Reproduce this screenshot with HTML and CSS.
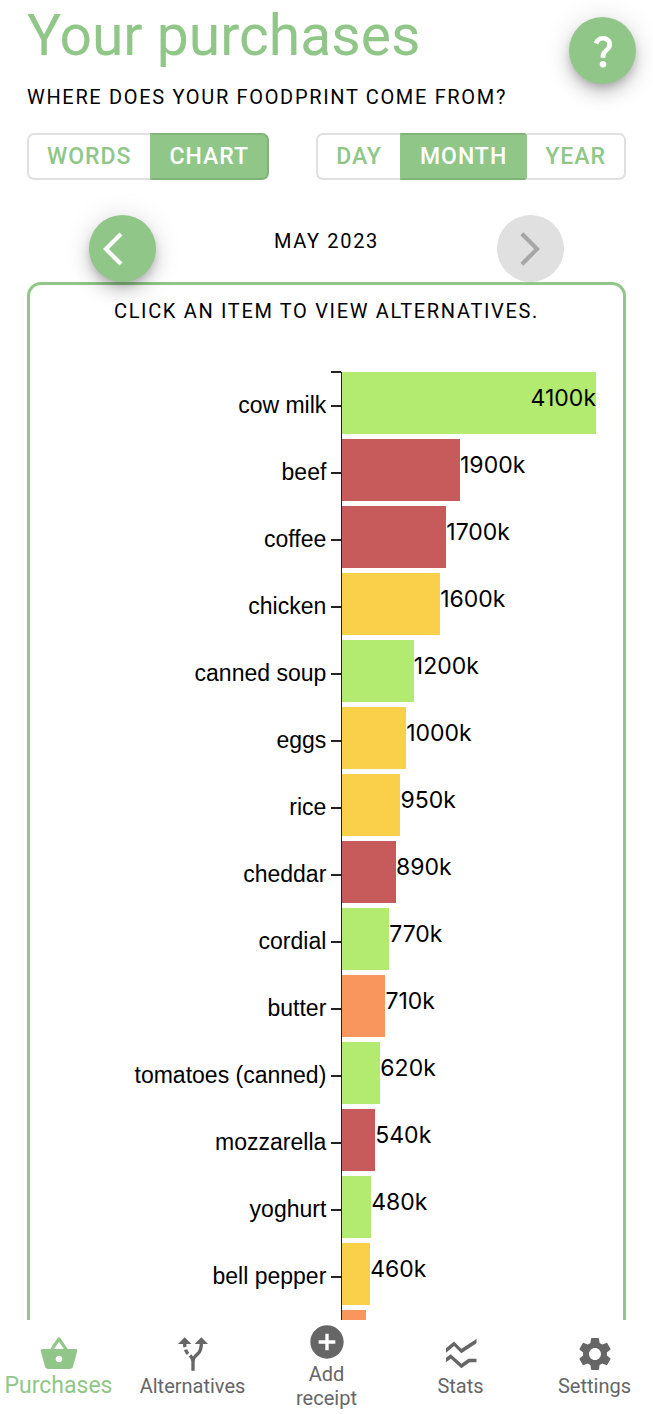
FILE: index.html
```html
<!DOCTYPE html>
<html lang="en">
<head>
<meta charset="utf-8">
<meta name="viewport" content="width=device-width, initial-scale=1">
<title>Your purchases</title>
<link rel="stylesheet" href="styles.css">
</head>
<body>
<main class="page">
  <header class="header">
    <div class="headings">
      <h1 class="title">Your purchases</h1>
      <p class="overline">Where does your foodprint come from?</p>
    </div>
    <button class="fab" type="button" aria-label="Help">
      <svg class="icon" viewBox="0 0 24 24"><path d="M11.07 12.85c.77-1.39 2.25-2.21 3.11-3.44.91-1.29.4-3.7-2.18-3.7-1.69 0-2.52 1.28-2.87 2.34L6.54 6.96C7.25 4.83 9.18 3 11.99 3c2.35 0 3.96 1.07 4.78 2.41.7 1.15 1.11 3.3.03 4.9-1.2 1.77-2.35 2.31-2.97 3.45-.25.46-.35.76-.35 2.24h-2.89c-.01-.78-.13-2.05.48-3.15zM14 20c0 1.1-.9 2-2 2s-2-.9-2-2 .9-2 2-2 2 .9 2 2z"/></svg>
    </button>
  </header>

  <div class="toggles">
    <div class="group" role="group" aria-label="View">
      <button class="toggle" type="button">Words</button>
      <button class="toggle selected" type="button" aria-pressed="true">Chart</button>
    </div>
    <div class="group" role="group" aria-label="Period">
      <button class="toggle" type="button">Day</button>
      <button class="toggle selected" type="button" aria-pressed="true">Month</button>
      <button class="toggle" type="button">Year</button>
    </div>
  </div>

  <div class="period">
    <button class="fab" type="button" aria-label="Previous month">
      <svg class="icon" viewBox="0 0 24 24"><path d="M11.67 3.87 9.9 2.1 0 12l9.9 9.9 1.77-1.77L3.54 12z"/></svg>
    </button>
    <p class="overline">May 2023</p>
    <button class="fab" type="button" aria-label="Next month" disabled>
      <svg class="icon" viewBox="0 0 24 24"><path d="M6.23 20.23 8 22l10-10L8 2 6.23 3.77 14.46 12z"/></svg>
    </button>
  </div>

  <section class="panel">
    <p class="overline">Click an item to view alternatives.</p>
    <ol class="chart">
      <li><button class="row" type="button"><span class="name">cow milk</span><span class="plot"><span class="bar green" style="width:100%"></span><span class="value inside">4100k</span></span></button></li>
      <li><button class="row" type="button"><span class="name">beef</span><span class="plot"><span class="bar red" style="width:46.4%"></span><span class="value">1900k</span></span></button></li>
      <li><button class="row" type="button"><span class="name">coffee</span><span class="plot"><span class="bar red" style="width:41%"></span><span class="value">1700k</span></span></button></li>
      <li><button class="row" type="button"><span class="name">chicken</span><span class="plot"><span class="bar yellow" style="width:38.6%"></span><span class="value">1600k</span></span></button></li>
      <li><button class="row" type="button"><span class="name">canned soup</span><span class="plot"><span class="bar green" style="width:28.2%"></span><span class="value">1200k</span></span></button></li>
      <li><button class="row" type="button"><span class="name">eggs</span><span class="plot"><span class="bar yellow" style="width:25.2%"></span><span class="value">1000k</span></span></button></li>
      <li><button class="row" type="button"><span class="name">rice</span><span class="plot"><span class="bar yellow" style="width:22.9%"></span><span class="value">950k</span></span></button></li>
      <li><button class="row" type="button"><span class="name">cheddar</span><span class="plot"><span class="bar red" style="width:21.2%"></span><span class="value">890k</span></span></button></li>
      <li><button class="row" type="button"><span class="name">cordial</span><span class="plot"><span class="bar green" style="width:18.5%"></span><span class="value">770k</span></span></button></li>
      <li><button class="row" type="button"><span class="name">butter</span><span class="plot"><span class="bar orange" style="width:17%"></span><span class="value">710k</span></span></button></li>
      <li><button class="row" type="button"><span class="name">tomatoes (canned)</span><span class="plot"><span class="bar green" style="width:15%"></span><span class="value">620k</span></span></button></li>
      <li><button class="row" type="button"><span class="name">mozzarella</span><span class="plot"><span class="bar red" style="width:13%"></span><span class="value">540k</span></span></button></li>
      <li><button class="row" type="button"><span class="name">yoghurt</span><span class="plot"><span class="bar green" style="width:11.4%"></span><span class="value">480k</span></span></button></li>
      <li><button class="row" type="button"><span class="name">bell pepper</span><span class="plot"><span class="bar yellow" style="width:11%"></span><span class="value">460k</span></span></button></li>
      <li class="row"><span class="name"></span><span class="plot"><span class="bar orange" style="width:9.4%"></span></span></li>
    </ol>
  </section>
</main>

<nav class="nav">
  <a class="tab current" href="#purchases" aria-current="page">
    <svg class="icon" viewBox="0 0 24 24"><path d="M17.21 9l-4.38-6.56c-.19-.28-.51-.42-.83-.42-.32 0-.64.14-.83.43L6.79 9H2c-.55 0-1 .45-1 1 0 .09.01.18.04.27l2.54 9.27c.23.84 1 1.46 1.92 1.46h13c.92 0 1.69-.62 1.93-1.46l2.54-9.27L23 10c0-.55-.45-1-1-1h-4.79zM9 9l3-4.4L15 9H9zm3 8c-1.1 0-2-.9-2-2s.9-2 2-2 2 .9 2 2-.9 2-2 2z"/></svg>
    <span>Purchases</span>
  </a>
  <a class="tab" href="#alternatives">
    <svg class="icon" viewBox="0 0 24 24"><path d="m9.78 11.16-1.42 1.42c-.68-.69-1.34-1.58-1.79-2.94l1.94-.49c.32.89.77 1.5 1.27 2.01zM11 6 7 2 3 6h3.02c.02.81.08 1.54.19 2.17l1.94-.49C8.08 7.2 8.03 6.63 8.02 6H11zm10 0-4-4-4 4h2.99c-.1 3.68-1.28 4.75-2.54 5.88-.5.44-1.01.92-1.45 1.55-.34-.49-.73-.88-1.13-1.24L9.46 13.6c.93.85 1.54 1.54 1.54 3.4v5h2v-5c0-2.02.71-2.66 1.79-3.63 1.38-1.24 3.08-2.78 3.2-7.37H21z"/></svg>
    <span>Alternatives</span>
  </a>
  <a class="tab" href="#add">
    <svg class="icon" viewBox="0 0 24 24"><path d="M12 2C6.48 2 2 6.48 2 12s4.48 10 10 10 10-4.48 10-10S17.52 2 12 2zm5 11h-4v4h-2v-4H7v-2h4V7h2v4h4v2z"/></svg>
    <span>Add<br>receipt</span>
  </a>
  <a class="tab" href="#stats">
    <svg class="icon" viewBox="0 0 24 24"><path d="M3 8.600 7.800 4.500 12.200 8.900 21.300 3V5.500L12.200 11.600 7.800 7.200 3 11.200zM3 14.300 5.900 12.200 12.200 17.800 16.500 14.800H21.300V17H17.200L12.200 20.600 5.900 14.900 3 16.900z"/></svg>
    <span>Stats</span>
  </a>
  <a class="tab" href="#settings">
    <svg class="icon" viewBox="0 0 24 24"><path d="M19.14 12.94c.04-.3.06-.61.06-.94 0-.32-.02-.64-.07-.94l2.03-1.58c.18-.14.23-.41.12-.61l-1.92-3.32c-.12-.22-.37-.29-.59-.22l-2.39.96c-.5-.38-1.03-.7-1.62-.94l-.36-2.54c-.04-.24-.24-.41-.48-.41h-3.84c-.24 0-.43.17-.47.41l-.36 2.54c-.59.24-1.13.57-1.62.94l-2.39-.96c-.22-.08-.47 0-.59.22L2.74 8.87c-.12.21-.08.47.12.61l2.03 1.58c-.05.3-.09.63-.09.94s.02.64.07.94l-2.03 1.58c-.18.14-.23.41-.12.61l1.92 3.32c.12.22.37.29.59.22l2.39-.96c.5.38 1.03.7 1.62.94l.36 2.54c.05.24.24.41.48.41h3.84c.24 0 .44-.17.47-.41l.36-2.54c.59-.24 1.13-.56 1.62-.94l2.39.96c.22.08.47 0 .59-.22l1.92-3.32c.12-.22.07-.47-.12-.61l-2.01-1.58zM12 15.600c-1.980 0-3.600-1.620-3.600-3.600s1.620-3.600 3.600-3.600 3.600 1.620 3.600 3.600-1.620 3.600-3.600 3.600z"/></svg>
    <span>Settings</span>
  </a>
</nav>
</body>
</html>
```
FILE: styles.css
```css
* {
  box-sizing: border-box;
}

body {
  display: flex;
  flex-direction: column;
  height: 100vh;
  margin: 0;
  overflow: hidden;
  background: #fff;
  color: #000;
  font-family: Roboto, "Liberation Sans", sans-serif;
}

button {
  margin: 0;
  padding: 0;
  border: 0;
  background: none;
  color: inherit;
  font: inherit;
  cursor: pointer;
}

h1,
p,
ol {
  margin: 0;
  padding: 0;
}

.page {
  flex: 1;
  min-height: 0;
  padding: 0 27px;
  overflow: hidden;
}

.icon {
  display: block;
  width: 40px;
  height: 40px;
  fill: currentColor;
}

.header {
  display: flex;
  justify-content: space-between;
  margin-right: -10px;
}

.title {
  color: #90c788;
  font-size: 57px;
  font-weight: 400;
  line-height: 71px;
}

.overline {
  font-size: 20px;
  letter-spacing: 0.0833em;
  line-height: 52px;
  text-transform: uppercase;
}

.fab {
  display: grid;
  place-items: center;
  width: 67px;
  height: 67px;
  border-radius: 50%;
  background: #90c788;
  box-shadow: 0 5px 8px -2px rgba(0, 0, 0, 0.2), 0 10px 17px rgba(0, 0, 0, 0.14), 0 2px 30px rgba(0, 0, 0, 0.12);
  color: #fff;
}

.fab:disabled {
  background: #e0e0e0;
  box-shadow: none;
  color: #a6a6a6;
}

.header .fab {
  margin-top: 17px;
}

.toggles {
  display: flex;
  justify-content: space-between;
  margin-top: 10px;
}

.group {
  display: flex;
}

.toggle {
  height: 47px;
  padding: 0 18px;
  border: 2px solid #e0e0e0;
  color: #90c788;
  font-size: 23px;
  font-weight: 500;
  letter-spacing: 1px;
  text-transform: uppercase;
}

.toggle + .toggle {
  margin-left: -2px;
  border-left-color: transparent;
}

.toggle:first-child {
  border-radius: 7px 0 0 7px;
}

.toggle:last-child {
  border-radius: 0 7px 7px 0;
}

.toggle.selected {
  border-color: #80b479;
  background: #90c788;
  color: #fff;
}

.toggle + .toggle.selected {
  border-left-color: #90c788;
}

.toggle.selected:not(:last-child) {
  border-right-color: #90c788;
}

.period {
  position: relative;
  display: grid;
  grid-template-columns: 1fr 1fr 1fr;
  justify-items: center;
  margin: 35px -6px 0;
}

.panel {
  padding: 0 27px 27px 0;
  border: 3px solid #90c788;
  border-radius: 14px;
}

.panel .overline {
  margin-right: -27px;
  text-align: center;
}

.chart {
  margin-top: 35px;
  list-style: none;
}

.row {
  display: grid;
  grid-template-columns: minmax(0, 1fr) 45%;
  width: 100%;
  height: 67px;
}

.name {
  position: relative;
  display: flex;
  align-items: center;
  justify-content: flex-end;
  gap: 5px;
  height: 67px;
  font-family: "Liberation Sans", Arial, sans-serif;
  font-size: 23px;
}

.name::after {
  width: 10px;
  height: 2px;
  background: #222;
  content: "";
}

/* End cap of the axis */
li:first-child .name::before {
  position: absolute;
  top: -1px;
  right: 0;
  width: 10px;
  height: 2px;
  background: #222;
  content: "";
}

.plot {
  display: flex;
  height: 67px;
  border-left: 1px solid #222;
}

.bar {
  flex: none;
  height: 62px;
}

.green {
  background: #b2eb70;
}

.red {
  background: #c75b5b;
}

.yellow {
  background: #fad04a;
}

.orange {
  background: #f8965d;
}

.value {
  font-family: Inter, sans-serif;
  font-size: 23px;
  line-height: 52px;
}

.value.inside {
  width: 0;
  direction: rtl;
}

.nav {
  display: flex;
  flex: none;
  justify-content: center;
  height: 94px;
  padding-bottom: 2px;
  background: #fff;
}

.tab {
  display: flex;
  flex: 1 0 134px;
  flex-direction: column;
  align-items: center;
  justify-content: center;
  color: #666;
  font-size: 20px;
  line-height: 24px;
  text-align: center;
  text-decoration: none;
}

.tab.current {
  color: #90c788;
  font-size: 23px;
}
```
